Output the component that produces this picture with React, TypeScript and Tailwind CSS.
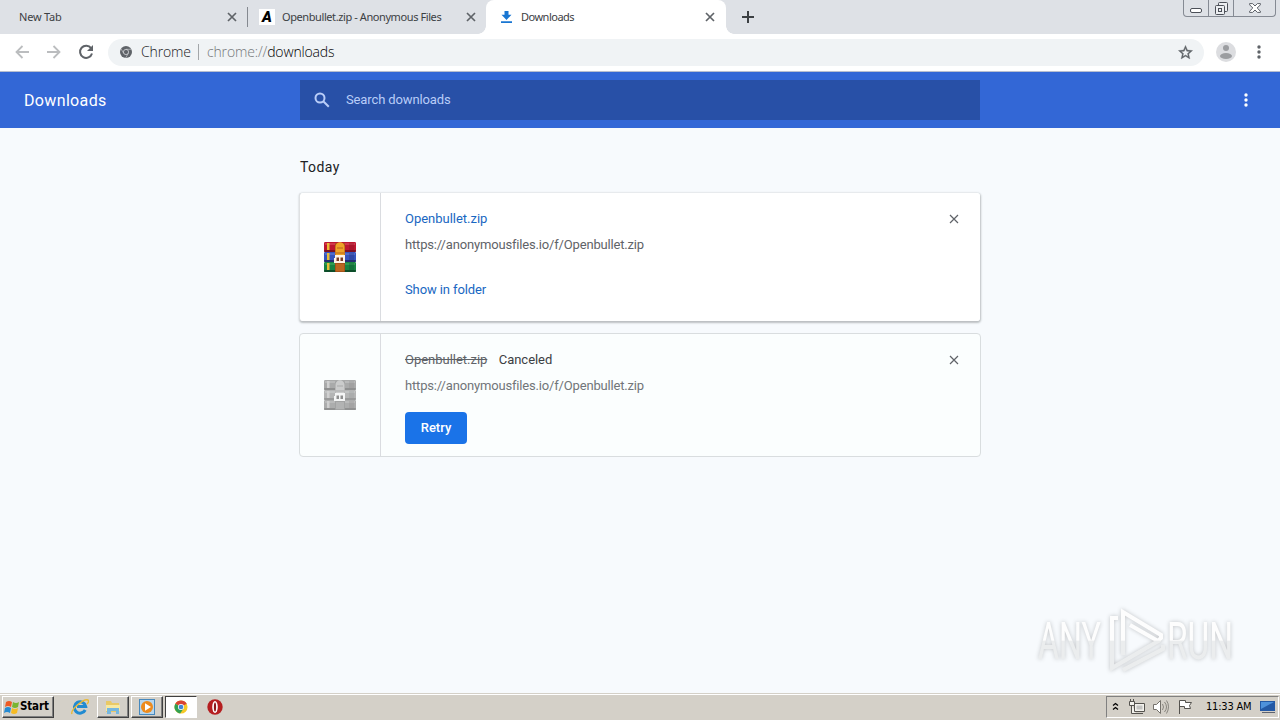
import type { ReactNode } from 'react';
import clsx from 'clsx';

interface IconProps {
  className?: string;
}

function CloseIcon({ className }: IconProps) {
  return (
    <svg viewBox="0 0 10 10" className={className} fill="none" stroke="currentColor">
      <path d="M1 1l8 8M9 1L1 9" />
    </svg>
  );
}

function DotsIcon({ className }: IconProps) {
  return (
    <svg viewBox="0 0 4 14" className={className} fill="currentColor">
      <circle cx="2" cy="2" r="1.7" />
      <circle cx="2" cy="7" r="1.7" />
      <circle cx="2" cy="12" r="1.7" />
    </svg>
  );
}

function ArchiveIcon({ muted }: { muted?: boolean }) {
  const rows = [
    { y: 0, color: muted ? '#a9aaaa' : '#bd1730', dark: muted ? '#8f9090' : '#7d1024', light: muted ? '#c6c7c7' : '#e05364' },
    { y: 10, color: muted ? '#b4b5b5' : '#3554bd', dark: muted ? '#999a9a' : '#252d70', light: muted ? '#cccdcd' : '#6680d8' },
    { y: 20, color: muted ? '#acadad' : '#188342', dark: muted ? '#919292' : '#0c4d29', light: muted ? '#c6c7c7' : '#45ae61' },
  ];
  const gold = muted ? '#cfd0d0' : '#e8bc35';

  return (
    <svg viewBox="0 0 32 30" className="h-[30px] w-8">
      {rows.map((row) => (
        <g key={row.y}>
          <rect x="0" y={row.y} width="32" height="10" rx="1.2" fill={row.color} />
          <rect x="1" y={row.y + 1} width="30" height="2" fill={row.light} opacity=".55" />
          <rect x="0" y={row.y + 8} width="32" height="2" rx="1" fill={row.dark} />
          <rect x="25" y={row.y + 1} width="5" height="7" fill={row.dark} opacity=".3" />
          <rect x="3" y={row.y + 1} width="2.5" height="7" fill={gold} />
        </g>
      ))}
      <rect x="11" y="1" width="10" height="29" rx="1" fill={muted ? '#a2a3a3' : '#a65219'} />
      <rect x="12" y="22" width="8" height="7" fill={muted ? '#b2b3b3' : '#bc6720'} />
      <path d="M11.5 5c0-6.5 9-6.5 9 0v9h-9z" fill={muted ? '#cbcccc' : '#efa327'} />
      <path d="M13 6h6M12 11h8" stroke={muted ? '#a9aaaa' : '#b8641b'} />
      <path d="M11 13h10v8H10v-5h1z" fill={muted ? '#f4f5f5' : '#fff3e6'} />
      <path d="M12.5 15.5h2.5v3.5h-2.5zM16.5 15.5h2.5v3.5h-2.5z" fill={muted ? '#8f9090' : '#7c3c22'} />
    </svg>
  );
}

interface TabProps {
  title: string;
  icon?: ReactNode;
  active?: boolean;
  className: string;
  titleClassName: string;
}

function Tab({ title, icon, active, className, titleClassName }: TabProps) {
  return (
    <div className={clsx('relative flex h-[34px] items-center text-[11px] text-[#3c4043]', active && 'rounded-t-lg bg-white', className)}>
      {active && (
        <>
          <span className="absolute bottom-0 -left-2 size-2 bg-[radial-gradient(circle_at_0_0,transparent_7.5px,white_8px)]" />
          <span className="absolute -right-2 bottom-0 size-2 bg-[radial-gradient(circle_at_100%_0,transparent_7.5px,white_8px)]" />
        </>
      )}
      {icon}
      <span className={clsx('grow whitespace-nowrap', titleClassName)}>{title}</span>
      <CloseIcon className="size-[10px] shrink-0 stroke-[1.7] text-[#5f6368]" />
    </div>
  );
}

function WindowButtons() {
  return (
    <div className="ml-auto flex h-[17px] w-[93px] rounded-b border border-t-0 border-[#858a93] text-[#4c5058]">
      <div className="flex w-[25px] items-end justify-center border-r border-[#858a93] pb-[3px]">
        <span className="h-[5px] w-3 rounded-[2px] border border-current bg-white" />
      </div>
      <div className="flex w-[25px] justify-center border-r border-[#858a93] pt-0.5">
        <svg viewBox="0 0 13 13" className="size-[13px]" fill="#eceef1" stroke="currentColor">
          <rect x="3.5" y=".5" width="9" height="9" rx="1" />
          <rect x=".5" y="3.5" width="9" height="9" rx="1" />
          <rect x="3.5" y="6.5" width="3" height="3" />
        </svg>
      </div>
      <div className="flex flex-1 justify-center pt-[3px]">
        <svg viewBox="0 0 12 10" className="h-[10px] w-3" fill="white" stroke="currentColor" strokeWidth=".9">
          <path d="M.6.6h3L6 3l2.4-2.4h3v1.2L8.2 5l3.2 3.2v1.2h-3L6 7 3.6 9.4h-3V8.2L3.8 5 .6 1.8z" />
        </svg>
      </div>
    </div>
  );
}

function TabStrip() {
  return (
    <div className="flex h-[34px] bg-[#dee1e6] font-['Noto_Sans','Liberation_Sans',sans-serif]">
      <Tab title="New Tab" className="w-[247px] pr-[10px] pl-[19px]" titleClassName="tracking-[-0.2px]" />
      <div className="mt-[7px] h-5 w-px bg-[#858990]" />
      <Tab
        title="Openbullet.zip - Anonymous Files"
        className="w-[238px] pr-[10px] pl-[11px]"
        titleClassName="ml-[7px] tracking-[-0.41px]"
        icon={
          <span className="flex size-4 items-center justify-center bg-white text-[15px] leading-4 font-black text-black italic font-[Roboto,sans-serif]">
            A
          </span>
        }
      />
      <Tab
        title="Downloads"
        active
        className="w-60 pr-[11px] pl-[15px]"
        titleClassName="ml-[9px] tracking-[-0.5px]"
        icon={
          <svg viewBox="0 0 11 12" className="h-3 w-[11px]" fill="#1976d2">
            <path d="M3.5 0h4v3.8h3L5.5 9 .5 3.8h3zM0 10.3h11V12H0z" />
          </svg>
        }
      />
      <svg viewBox="0 0 12 12" className="mt-[11px] ml-4 size-3" stroke="#3c4043" strokeWidth="2">
        <path d="M6 0v12M0 6h12" />
      </svg>
      <div className="grow pr-[4px]">
        <WindowButtons />
      </div>
    </div>
  );
}

function Toolbar() {
  return (
    <div className="flex h-[38px] items-center border-b border-[#b8bfcf] bg-white pb-px">
      <svg viewBox="0 0 14 14" className="ml-[15px] size-[14px]" fill="none" stroke="#bbbdbf" strokeWidth="1.8">
        <path d="M14 7H1.5M7.5 1l-6 6 6 6" />
      </svg>
      <svg viewBox="0 0 14 14" className="ml-[18px] size-[14px]" fill="none" stroke="#bbbdbf" strokeWidth="1.8">
        <path d="M0 7h12.5M6.5 1l6 6-6 6" />
      </svg>
      <svg viewBox="0 0 16 16" className="ml-[17px] size-4" fill="none" stroke="#5f6368" strokeWidth="2">
        <path d="M13.1 4.2A6.1 6.1 0 1 0 14 9.5" />
        <path d="M15 1v6H9z" fill="#5f6368" stroke="none" />
      </svg>
      <div className="ml-[14px] flex h-[27px] w-[1096px] items-center rounded-full bg-[#f0f3f5] pr-[10px] pl-3 font-['Open_Sans',sans-serif] text-sm">
        <svg viewBox="0 0 12 12" className="size-3">
          <circle cx="6" cy="6" r="6" fill="#5f6368" />
          <circle cx="6" cy="6" r="2.6" fill="none" stroke="#d5d7da" strokeWidth=".8" />
          <path d="M6 3.3h5.4M3.7 7.3L1 2.8M8.3 7.4L5.6 12" stroke="#d5d7da" strokeWidth=".6" />
        </svg>
        <span className="ml-[9px] w-[50px] font-light tracking-[-0.15px] whitespace-nowrap text-[#202124]">Chrome</span>
        <span className="mr-2 ml-[7px] h-4 w-px bg-[#a3a6a9]" />
        <span className="font-light tracking-[-0.15px] text-[#747779]">
          chrome://<span className="text-black">downloads</span>
        </span>
        <svg viewBox="0 0 24 24" className="ml-auto size-[17px]" fill="#5f6368" stroke="#5f6368" strokeWidth=".5">
          <path d="M22 9.24l-7.19-.62L12 2 9.19 8.63 2 9.24l5.46 4.73L5.82 21 12 17.27 18.18 21l-1.63-7.03zM12 15.4l-3.76 2.27 1-4.28-3.32-2.88 4.38-.38L12 6.1l1.71 4.04 4.38.38-3.32 2.88 1 4.28z" />
        </svg>
      </div>
      <svg viewBox="0 0 20 20" className="ml-3 size-5">
        <circle cx="10" cy="10" r="10" fill="#dcdde0" />
        <circle cx="10" cy="6" r="3" fill="#9b9da0" />
        <ellipse cx="10" cy="14" rx="6" ry="3" fill="#9b9da0" />
      </svg>
      <DotsIcon className="ml-[21px] h-[14px] w-[4px] text-[#5f6368]" />
    </div>
  );
}

function DownloadsHeader() {
  return (
    <header className="flex h-14 items-center bg-[#3367d6] text-white">
      <h1 className="w-[300px] pt-0.5 pl-6 text-base tracking-[0.35px]">Downloads</h1>
      <div className="flex h-10 w-[680px] items-center bg-[#2850a7] pl-[14px] text-[13px] text-[#b9cdf8]">
        <svg viewBox="0 0 16 16" className="size-4" fill="none" stroke="currentColor" strokeWidth="2">
          <circle cx="6" cy="6" r="4.5" />
          <path d="M9.5 9.5l5.3 5.3" />
        </svg>
        <span className="ml-4 tracking-[-0.12px]">Search downloads</span>
      </div>
      <DotsIcon className="ml-[264px] h-[14px] w-[4px]" />
    </header>
  );
}

const url = 'https://anonymousfiles.io/f/Openbullet.zip';

function DownloadItem({ canceled }: { canceled?: boolean }) {
  return (
    <div
      className={clsx(
        '-mx-px flex rounded border',
        canceled ? 'mt-[11px] h-[124px] border-[#d9dddf] bg-[#fbfefe]' : 'h-[130px] border-transparent border-l-[#dfe1e3] bg-white bg-clip-padding shadow-[0_1px_2px_rgba(60,64,67,0.32)]',
      )}
    >
      <div className="flex w-[81px] items-center justify-center border-r border-[#dadce0]">
        <ArchiveIcon muted={canceled} />
      </div>
      <div className="flex grow flex-col items-start pt-4 pl-6 text-[13px] leading-5">
        <div className="flex">
          <span className={clsx('tracking-[-0.02px]', canceled ? 'text-[#5f6368] line-through' : 'text-[#1967c2]')}>Openbullet.zip</span>
          {canceled && <span className="ml-[11.5px] tracking-[-0.05px] text-[#3c4043]">Canceled</span>}
        </div>
        <span className={clsx('mt-1.5 tracking-[-0.17px]', canceled ? 'text-[#717579]' : 'text-[#5f6368]')}>{url}</span>
        {canceled ? (
          <button className="mt-4 h-8 w-[62px] rounded bg-[#1a73e8] font-medium text-white">Retry</button>
        ) : (
          <button className="mt-[25px] tracking-[-0.1px] text-[#1967c2]">Show in folder</button>
        )}
      </div>
      <CloseIcon className="mt-[21px] mr-[21px] size-[10px] stroke-[1.2] text-[#5f6368]" />
    </div>
  );
}

function Watermark() {
  return (
    <svg
      viewBox="0 0 200 64"
      className="absolute top-[536px] left-[1036px] h-16 w-[200px] overflow-visible drop-shadow-[0_0_2px_rgba(0,0,0,0.22)]"
    >
      <defs>
        <linearGradient id="mark" gradientUnits="userSpaceOnUse" x1="0" y1="14" x2="0" y2="52">
          <stop offset=".48" stopColor="#fdfdfd" />
          <stop offset=".5" stopColor="#ebedee" />
        </linearGradient>
      </defs>
      <g fill="url(#mark)" fontFamily="Roboto, sans-serif" fontSize="51" fontWeight="400">
        <text x="2" y="51" textLength="63" lengthAdjust="spacingAndGlyphs">ANY</text>
        <text x="131" y="51" textLength="66" lengthAdjust="spacingAndGlyphs">RUN</text>
      </g>
      <g fill="none" stroke="url(#mark)" strokeWidth="4">
        <path d="M82 10h-6v50l24-14 24-14" />
        <path d="M87 47V4l38 23v3L122 33 94 17" />
        <path d="M127 37v4L87 62" />
      </g>
    </svg>
  );
}

function TaskButton({ pressed, children }: { pressed?: boolean; children: ReactNode }) {
  return (
    <div
      className={clsx(
        'flex h-[22px] w-8 items-center justify-center border',
        pressed
          ? 'border-[#404040] border-r-white border-b-white bg-white'
          : 'border-white border-r-[#404040] border-b-[#404040] bg-[#d4d0c8] shadow-[inset_-1px_-1px_#808080]',
      )}
    >
      {children}
    </div>
  );
}

function Taskbar() {
  return (
    <div className="flex h-[27px] items-start border-t border-[#d4d0c8] bg-[#d4d0c8] pt-px pl-[2px] shadow-[inset_0_1px_white] font-['DejaVu_Sans_Condensed','DejaVu_Sans',sans-serif] text-black">
      <div className="flex h-6 w-full items-center">
        <div className="flex h-[22px] w-[52px] items-center border border-white border-r-[#404040] border-b-[#404040] pl-px font-bold shadow-[inset_-1px_-1px_#808080]">
          <svg viewBox="0 0 16 16" className="size-4 shrink-0">
            <path d="M2 3q3-2 6 0L7 8q-3-2-6 0z" fill="#ed5b25" />
            <path d="M9 3q3 2 6 0l-1 5q-3 2-6 0z" fill="#79b531" />
            <path d="M1 9q3-2 6 0l-1 5q-3-2-6 0z" fill="#268bd2" />
            <path d="M8 9q3 2 6 0l-1 5q-3 2-6 0z" fill="#f6bb23" />
          </svg>
          <span className="text-[11.5px] tracking-[-0.15px]">Start</span>
        </div>
        <svg viewBox="0 0 18 18" className="ml-[17px] size-[18px]" fill="none">
          <path d="M14.2 12a5.7 5.7 0 1 1 .5-3.5H6" stroke="#218bd1" strokeWidth="3" />
          <path d="M1 16C-1 12 13 0 17 2c1 1 0 3-1 4" stroke="#e9b935" strokeWidth="1.4" />
        </svg>
        <div className="ml-[8px] flex gap-[2px]">
          <TaskButton>
            <svg viewBox="0 0 18 16" className="h-4 w-[18px]">
              <path d="M2 2h5l1 2h7v9H2z" fill="#e9c966" />
              <path d="M2 6h14v6H2z" fill="#f7e9a1" />
              <path d="M3 9h12v6h-3v-3H7v3H3z" fill="#76b7df" />
            </svg>
          </TaskButton>
          <TaskButton>
            <svg viewBox="0 0 16 16" className="size-4">
              <rect x=".5" y=".5" width="15" height="15" fill="#b7d6ed" stroke="#4688bd" />
              <circle cx="8" cy="8" r="6" fill="#ed8b1d" />
              <path d="M6 4.3v7.4L12 8z" fill="white" />
            </svg>
          </TaskButton>
          <TaskButton pressed>
            <svg viewBox="0 0 16 16" className="size-[14px]">
              <circle cx="8" cy="8" r="7.5" fill="#f6c927" />
              <path d="M8 8L1.5 4.2a7.5 7.5 0 0 1 13 0z" fill="#d94335" />
              <path d="M8 8L1.5 4.2A7.5 7.5 0 0 0 7 15.4l4-5.8z" fill="#31a053" />
              <circle cx="8" cy="8" r="3.5" fill="white" />
              <circle cx="8" cy="8" r="2.7" fill="#4285d6" />
            </svg>
          </TaskButton>
        </div>
        <svg viewBox="0 0 16 16" className="ml-[10px] size-4">
          <circle cx="8" cy="8" r="7.7" fill="#b51e20" />
          <ellipse cx="8" cy="8" rx="2.8" ry="6" fill="white" />
          <ellipse cx="8" cy="8" rx="1.1" ry="4.6" fill="#8c1719" />
        </svg>
        <div className="mr-[1px] ml-auto flex h-[22px] w-[173px] items-center border border-[#808080] border-r-white border-b-white pl-[5px]">
          <svg viewBox="0 0 7 8" className="h-2 w-[7px] -translate-y-px" fill="none" stroke="black" strokeWidth="1.3">
            <path d="M1 3.5l2.5-2 2.5 2M1 7.5l2.5-2 2.5 2" />
          </svg>
          <svg viewBox="0 0 16 16" className="ml-[10px] size-4" fill="#f3f2ed" stroke="#55534f">
            <path d="M5.5 4.5h10v8h-10zM7 14.5h7M2.5 5v9.5H7" />
            <path d="M.5 2.5h5v4h-5zM1.5 0v2M4.5 0v2" />
            <path d="M7.5 6.5h6v4h-6z" fill="#c4c4c2" stroke="none" />
          </svg>
          <svg viewBox="0 0 16 16" className="ml-2 size-4" fill="white" stroke="#74716b">
            <path d="M.5 5.5h3l4-4v13l-4-4h-3z" />
            <path d="M9.5 5q2 3 0 6M11.5 3q4 5 0 10M13.5 1.5q4 6 0 13" fill="none" strokeWidth=".8" />
          </svg>
          <svg viewBox="0 0 16 16" className="ml-2 size-4" fill="white" stroke="#55534f">
            <path d="M2.5 15V1.5h6v2h6l-2 3 1 3h-6v-2h-5" />
          </svg>
          <span className="ml-[13px] w-[47px] text-[11px] tracking-[-0.2px] whitespace-nowrap">11:33 AM</span>
          <svg viewBox="0 0 16 14" className="ml-[7px] h-[14px] w-4">
            <path d="M0 1h15v10H0z" fill="#2459a5" />
            <path d="M1 2h13L1 9z" fill="#4e91db" />
            <path d="M2 12h13v1H2z" fill="#5d6370" />
          </svg>
        </div>
      </div>
    </div>
  );
}

export default function App() {
  return (
    <div className="flex h-[720px] w-[1280px] flex-col overflow-hidden bg-[#f7fafd]">
      <TabStrip />
      <Toolbar />
      <div className="relative h-[621px] font-[Roboto,sans-serif]">
        <DownloadsHeader />
        <main className="mx-auto w-[680px] pt-[27px]">
          <h2 className="mb-[13px] h-6 text-sm leading-6 tracking-[0.4px] text-[#202124]">Today</h2>
          <DownloadItem />
          <DownloadItem canceled />
        </main>
        <Watermark />
      </div>
      <Taskbar />
    </div>
  );
}
